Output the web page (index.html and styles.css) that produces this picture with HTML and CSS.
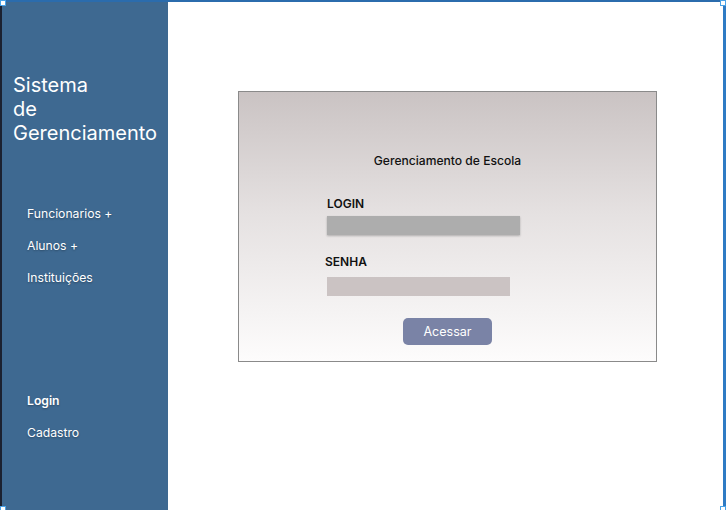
FILE: index.html
```html
<!DOCTYPE html>
<html lang="pt">
<head>
<meta charset="utf-8">
<title>Sistema de Gerenciamento</title>
<link rel="stylesheet" href="styles.css">
</head>
<body>
<div class="frame">
  <aside class="sidebar">
    <h1 class="brand">Sistema<br>de<br>Gerenciamento</h1>
    <nav class="nav-main">
      <a class="nav-item">Funcionarios +</a>
      <a class="nav-item">Alunos +</a>
      <a class="nav-item">Instituições</a>
    </nav>
    <nav class="nav-account">
      <a class="nav-item strong">Login</a>
      <a class="nav-item">Cadastro</a>
    </nav>
  </aside>
  <main class="content">
    <section class="card">
      <h2 class="card-title">Gerenciamento de Escola</h2>
      <div class="field field-login">
        <label class="field-label">LOGIN</label>
        <div class="input input-login"></div>
      </div>
      <div class="field field-senha">
        <label class="field-label shift">SENHA</label>
        <div class="input input-senha"></div>
      </div>
      <div class="actions">
        <button class="btn">Acessar</button>
      </div>
    </section>
  </main>
  <span class="handle tl"></span>
  <span class="handle tr"></span>
  <span class="handle bl"></span>
  <span class="handle br"></span>
</div>
</body>
</html>
```
FILE: styles.css
```css
* { box-sizing: border-box; }
html, body { margin: 0; padding: 0; }
body {
  width: 726px;
  height: 510px;
  overflow: hidden;
  background: #ffffff;
  font-family: Inter, "Liberation Sans", Arial, sans-serif;
}
.frame {
  position: relative;
  width: 726px;
  height: 510px;
  display: flex;
  border-top: 2px solid #2b6cad;
  border-left: 2px solid #1b2130;
  border-right: 3px solid #2f7bc4;
}
.sidebar {
  width: 166px;
  flex: none;
  background: #3e6991;
  color: #ffffff;
  display: flex;
  flex-direction: column;
  padding: 71px 0 0 11px;
}
.brand {
  margin: 0;
  font-size: 20px;
  font-weight: 400;
  line-height: 24px;
  letter-spacing: 0;
}
.nav-main {
  display: flex;
  flex-direction: column;
  gap: 16px;
  margin-top: 61px;
  padding-left: 14px;
}
.nav-account {
  display: flex;
  flex-direction: column;
  gap: 16px;
  margin-top: 107px;
  padding-left: 14px;
}
.nav-item {
  font-size: 12.2px;
  line-height: 16px;
  color: #ffffff;
  text-shadow: 0 1px 2px rgba(0,0,0,0.3);
}
.nav-item.strong { font-weight: 600; }
.content {
  flex: 1;
  padding: 89px 0 0 70px;
}
.card {
  width: 419px;
  height: 271px;
  border: 1px solid #8a8a8a;
  background: linear-gradient(to bottom, #cac3c3 0%, #e5e1e1 45%, #fdfcfc 100%);
  display: flex;
  flex-direction: column;
  padding: 62px 0 0 88px;
}
.card-title {
  margin: 0 0 0 -88px;
  text-align: center;
  font-size: 12.1px;
  font-weight: 500;
  line-height: 14px;
  color: #111111;
}
.field { display: flex; flex-direction: column; }
.field-login { margin-top: 29px; }
.field-senha { margin-top: 20px; }
.field-label {
  font-size: 12px;
  font-weight: 600;
  line-height: 14px;
  color: #111111;
}
.field-label.shift { margin-left: -2px; }
.input { height: 19px; }
.input-login {
  width: 193px;
  margin-top: 5px;
  background: #adadad;
  box-shadow: 0 1px 2px rgba(0,0,0,0.25);
}
.input-senha {
  width: 183px;
  background: #cbc3c3;
  margin-top: 8px;
}
.actions {
  display: flex;
  justify-content: center;
  margin: 22px 0 0 -88px;
}
.btn {
  width: 89px;
  height: 27px;
  border: none;
  border-radius: 5px;
  background: #7a83a6;
  color: #ffffff;
  font-family: inherit;
  font-size: 12.5px;
  padding: 0;
}
.handle {
  position: absolute;
  width: 6px;
  height: 6px;
  background: #ffffff;
  border: 1px solid #4aa3e8;
}
.handle.tl { left: -2px; top: -2px; }
.handle.tr { right: -3px; top: -2px; }
.handle.bl { left: -2px; bottom: -2px; }
.handle.br { right: -3px; bottom: -2px; }
```
